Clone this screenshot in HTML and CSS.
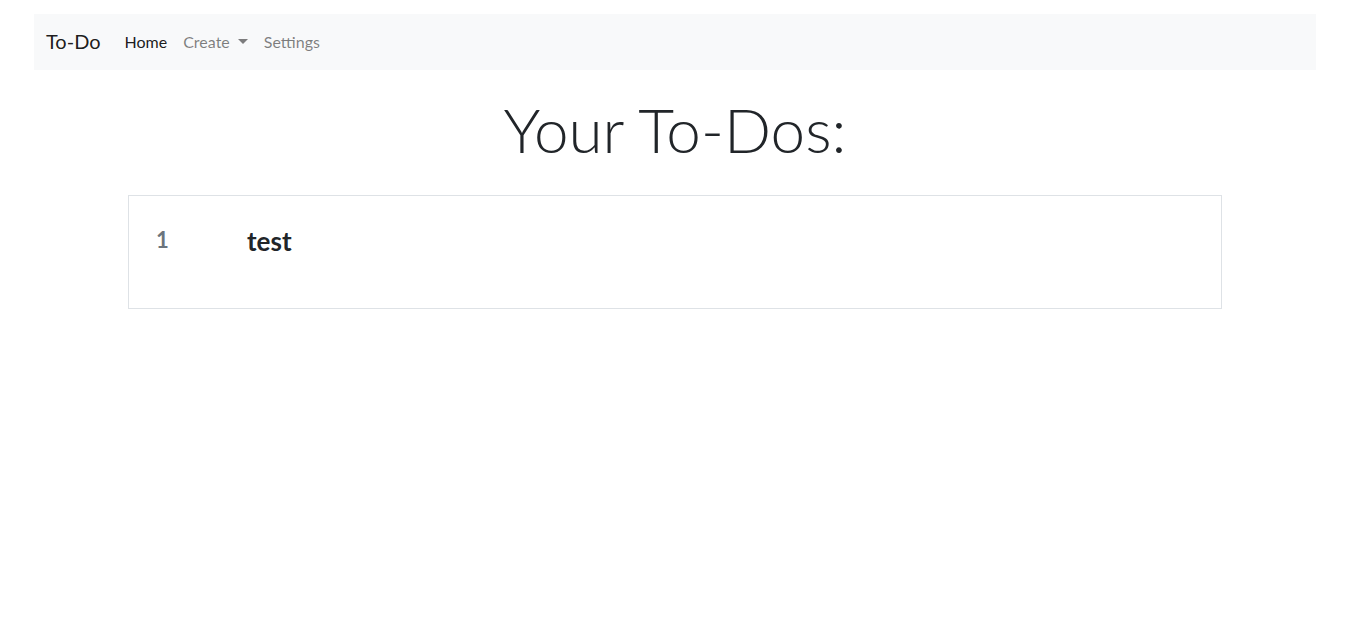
FILE: index.html
```html
<!DOCTYPE html>
<html>
<head>
<meta charset="utf-8">
<title>To-Do</title>
<link rel="stylesheet" href="styles.css">
</head>
<body>
<div class="page">
  <nav class="navbar">
    <a class="brand" href="#">To-Do</a>
    <ul class="nav">
      <li><a class="nav-link active" href="#">Home</a></li>
      <li><a class="nav-link dropdown" href="#">Create <span class="caret"></span></a></li>
      <li><a class="nav-link" href="#">Settings</a></li>
    </ul>
  </nav>
  <h1 class="title">Your To-Dos:</h1>
  <div class="card">
    <span class="num">1</span>
    <span class="item">test</span>
  </div>
</div>
</body>
</html>
```
FILE: styles.css
```css
html, body {
  margin: 0;
  padding: 0;
  background: #fff;
}
body {
  font-family: "Lato", "Noto Sans", sans-serif;
  color: #212529;
}
.page {
  padding: 14px 34px 0;
}
.navbar {
  display: flex;
  align-items: center;
  height: 56px;
  box-sizing: border-box;
  padding: 0 12px 2px;
  background: #f8f9fa;
}
.brand {
  font-size: 20px;
  color: rgba(0,0,0,.9);
  text-decoration: none;
  margin-right: 16px;
}
.nav {
  display: flex;
  list-style: none;
  margin: 0;
  padding: 0;
}
.nav-link {
  display: flex;
  align-items: center;
  padding: 8px 8px;
  font-size: 16px;
  color: rgba(0,0,0,.5);
  text-decoration: none;
}
.nav-link.active {
  color: rgba(0,0,0,.9);
}
.caret {
  display: inline-block;
  width: 0;
  height: 0;
  margin-left: 8px;
  border-top: 5px solid rgba(0,0,0,.5);
  border-left: 5px solid transparent;
  border-right: 5px solid transparent;
}
.title {
  text-align: center;
  font-size: 62px;
  font-weight: 300;
  line-height: 1.2;
  margin: 22px 0 29px;
  color: #212529;
}
.card {
  margin: 0 94px;
  height: 114px;
  border: 1px solid #dee2e6;
  display: flex;
  align-items: flex-start;
  padding: 30px 0 0 27px;
  box-sizing: border-box;
}
.num {
  font-size: 22px;
  font-weight: 700;
  color: #6c757d;
  width: 91px;
}
.item {
  font-size: 26px;
  font-weight: 700;
  color: #212529;
  margin-top: -1px;
}
```
